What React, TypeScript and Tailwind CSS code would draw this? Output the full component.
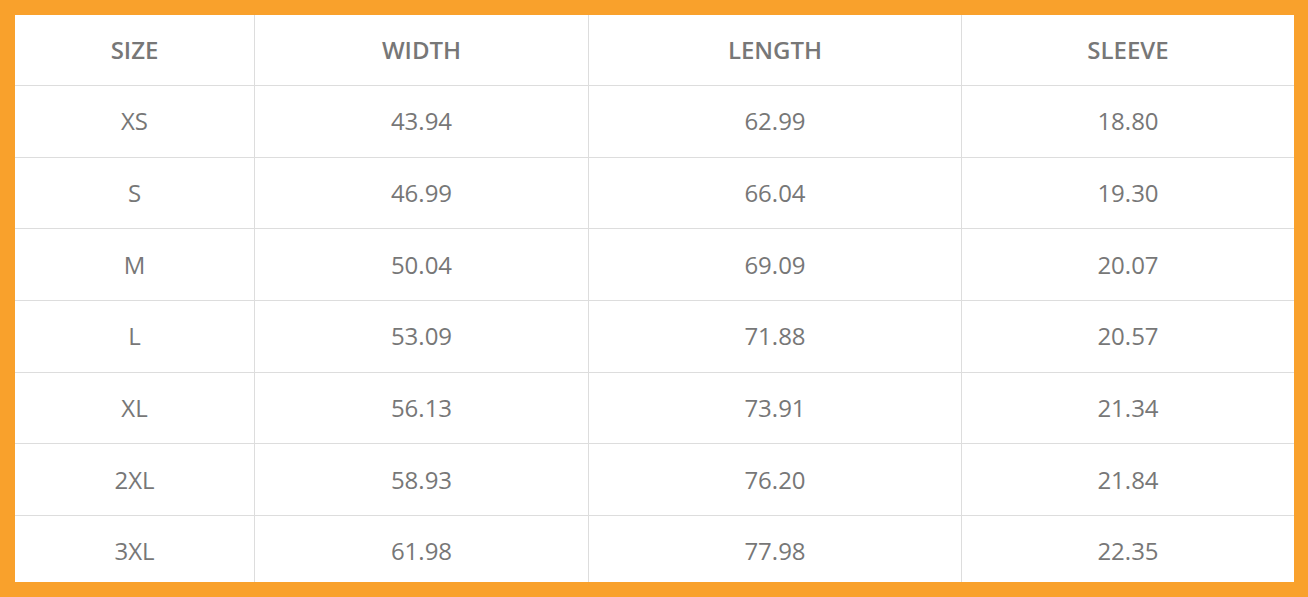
import React from 'react';

const rows: string[][] = [
  ['XS', '43.94', '62.99', '18.80'],
  ['S', '46.99', '66.04', '19.30'],
  ['M', '50.04', '69.09', '20.07'],
  ['L', '53.09', '71.88', '20.57'],
  ['XL', '56.13', '73.91', '21.34'],
  ['2XL', '58.93', '76.20', '21.84'],
  ['3XL', '61.98', '77.98', '22.35'],
];

const headers = ['SIZE', 'WIDTH', 'LENGTH', 'SLEEVE'];

export default function App() {
  return (
    <div className="w-[1308px] h-[597px] bg-[#f9a12c] pt-[15px] pb-[15px] pl-[15px] pr-[14px]">
      <div
        className="h-[567px] bg-white overflow-hidden text-[#777777] text-[24px]"
        style={{ fontFamily: '"Open Sans", "Liberation Sans", sans-serif' }}
      >
        <div className="grid grid-cols-[239px_334px_373px_333px] h-[71px] border-b border-[#dddddd]">
          {headers.map((h, i) => (
            <div
              key={h}
              className={`flex items-center justify-center font-semibold ${i > 0 ? 'border-l border-[#dddddd]' : ''}`}
            >
              {h}
            </div>
          ))}
        </div>
        {rows.map((r, ri) => (
          <div
            key={ri}
            className="grid grid-cols-[239px_334px_373px_333px] h-[71.67px] border-b border-[#dddddd]"
          >
            {r.map((c, ci) => (
              <div
                key={ci}
                className={`flex items-center justify-center ${ci > 0 ? 'border-l border-[#dddddd]' : ''}`}
              >
                {c}
              </div>
            ))}
          </div>
        ))}
      </div>
    </div>
  );
}
